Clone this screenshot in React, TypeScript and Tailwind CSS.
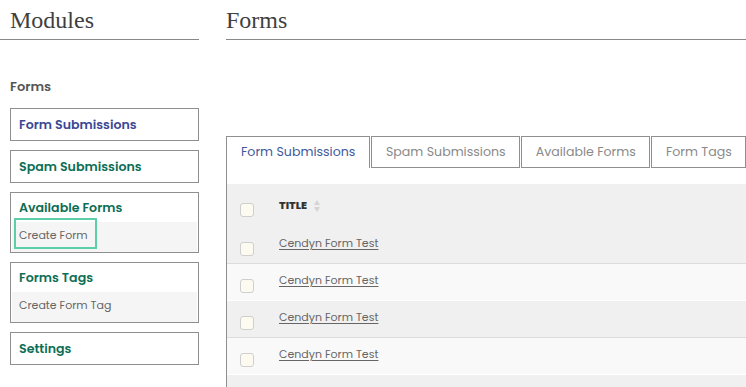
import React from 'react';

const sans = "font-['Poppins','Noto_Sans','Open_Sans',sans-serif]";
const serif = "font-['Liberation_Serif','Times_New_Roman',serif]";

const Checkbox: React.FC<{ top: string }> = ({ top }) => (
  <span className={`${top} block size-[14px] shrink-0 rounded-[3px] border border-[#cfcfcf] bg-[#fdfaf0]`} />
);

const SideCard: React.FC<{ title: string; color: string; sub?: string; focus?: boolean }> = ({ title, color, sub, focus }) => (
  <div className="ml-[10px] border border-[#8f8f8f] bg-white">
    <div className={`pl-[8px] text-[12.6px] font-semibold ${sub ? 'h-[29px] leading-[29px]' : 'h-[31px] leading-[31px]'} ${color}`}>
      {title}
    </div>
    {sub && (
      <div className="mx-px flex h-[30px] bg-[#f5f5f5] pl-[4px]">
        <span
          className={`-mt-[2px] flex h-[27px] items-center pl-[3px] pr-[7px] pt-[5px] text-[11px] text-[#666] ${
            focus ? 'outline-2 outline-[#5ccfa6]' : ''
          }`}
        >
          {sub}
        </span>
      </div>
    )}
  </div>
);

const tabs = ['Form Submissions', 'Spam Submissions', 'Available Forms', 'Form Tags'];

export default function App() {
  return (
    <div className={`flex h-[387px] w-[746px] overflow-hidden bg-white ${sans}`}>
      <aside className="w-[199px] shrink-0">
        <h1 className={`h-[40px] border-b border-[#888] pl-[10px] pt-[6px] text-[24px] leading-[28px] text-[#3f3f3f] ${serif}`}>
          Modules
        </h1>
        <div className="mt-[37px] pl-[10px] text-[13px] font-semibold text-[#555]">Forms</div>
        <div className="mt-[11px] flex flex-col gap-[9px]">
          <SideCard title="Form Submissions" color="text-[#3b4793]" />
          <SideCard title="Spam Submissions" color="text-[#0c6e55]" />
          <SideCard title="Available Forms" color="text-[#0c6e55]" sub="Create Form" focus />
          <SideCard title="Forms Tags" color="text-[#0c6e55]" sub="Create Form Tag" />
          <SideCard title="Settings" color="text-[#0c6e55]" />
        </div>
      </aside>

      <main className="ml-[27px] flex min-w-0 flex-1 flex-col">
        <h1 className={`h-[40px] border-b border-[#888] pt-[6px] text-[24px] leading-[28px] text-[#3f3f3f] ${serif}`}>
          Forms
        </h1>
        <div className="mt-[96px] flex gap-px">
          {tabs.map((t, i) => (
            <div
              key={t}
              className={`h-[32px] shrink-0 border border-[#8f8f8f] text-[12.6px] leading-[30px] ${
                i === 0 ? 'border-b-0 px-[14px] text-[#3f5a9c]' : 'px-[13.5px] text-[#8a8a8a]'
              }`}
            >
              {t}
            </div>
          ))}
        </div>
        <div className="flex flex-1 flex-col border-l border-[#8f8f8f] pt-[16px]">
          <div className="flex h-[43px] gap-[25px] bg-[#f0f0f0] pl-[13px]">
            <Checkbox top="mt-[19px]" />
            <div className="flex h-[43px] items-center text-[11px] font-extrabold uppercase text-[#333]">
              Title
              <svg width="8" height="14" viewBox="0 0 8 14" className="ml-[6px]">
                <path d="M4 1 L7 6 H1 Z" fill="#d4d4d4" />
                <path d="M4 13 L7 8 H1 Z" fill="#d4d4d4" />
              </svg>
            </div>
          </div>
          {[0, 1, 2, 3].map((i) => (
            <div
              key={i}
              className={`flex h-[37px] gap-[25px] pl-[13px] ${
                i % 2 === 0 ? 'border-b border-[#dcdcdc] bg-[#f0f0f0]' : 'border-b border-white bg-[#f9f9f9]'
              }`}
            >
              <Checkbox top="mt-[15px]" />
              <a className="pt-[8px] text-[11px] text-[#666] underline underline-offset-2">Cendyn Form Test</a>
            </div>
          ))}
          <div className="flex-1 bg-[#f0f0f0]" />
        </div>
      </main>
    </div>
  );
}
